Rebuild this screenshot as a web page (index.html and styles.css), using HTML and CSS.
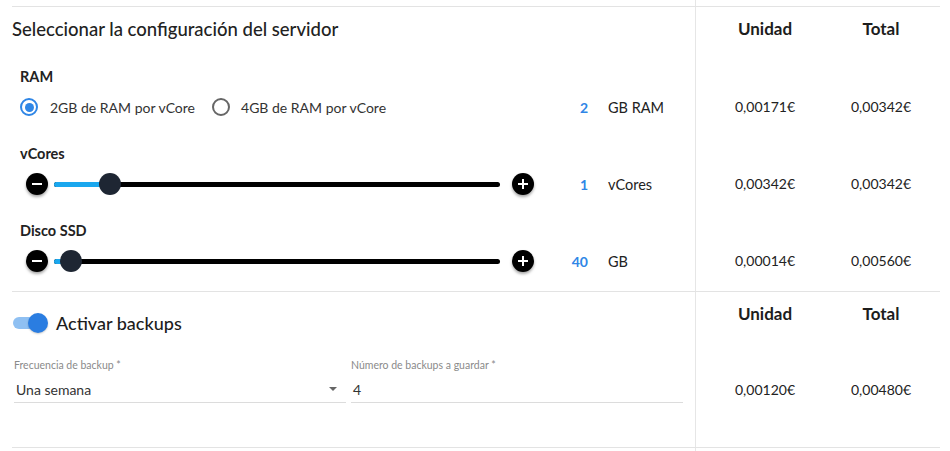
FILE: index.html
```html
<!DOCTYPE html>
<html lang="es">
<head>
    <meta charset="UTF-8">
    <meta name="viewport" content="width=device-width, initial-scale=1.0">
    <title>Configuración del servidor</title>
    <link rel="stylesheet" href="styles.css">
</head>
<body>
    <div class="sheet">
        <!-- Server config -->
        <section class="block config">
            <div class="row head">
                <h2 class="title">Seleccionar la configuración del servidor</h2>
                <div class="col-head">Unidad</div>
                <div class="col-head">Total</div>
            </div>

            <div class="row resource">
                <div class="res-label">RAM</div>
                <div class="res-control">
                    <div class="input-area radios">
                        <label class="radio checked"><span class="ring"></span>2GB de RAM por vCore</label>
                        <label class="radio"><span class="ring"></span>4GB de RAM por vCore</label>
                    </div>
                    <span class="qty">2</span>
                    <span class="unit">GB RAM</span>
                </div>
                <div class="price">0,00171€</div>
                <div class="price">0,00342€</div>
            </div>

            <div class="row resource">
                <div class="res-label">vCores</div>
                <div class="res-control">
                    <div class="input-area slider">
                        <span class="step-btn">
                            <svg width="22" height="22" viewBox="0 0 22 22"><path d="M6 11h10" stroke="#fff" stroke-width="2"/></svg>
                        </span>
                        <div class="track">
                            <div class="fill" style="width: 12.6%"></div>
                            <span class="thumb" style="left: 12.6%"></span>
                        </div>
                        <span class="step-btn">
                            <svg width="22" height="22" viewBox="0 0 22 22"><path d="M6 11h10M11 6v10" stroke="#fff" stroke-width="2"/></svg>
                        </span>
                    </div>
                    <span class="qty">1</span>
                    <span class="unit">vCores</span>
                </div>
                <div class="price">0,00342€</div>
                <div class="price">0,00342€</div>
            </div>

            <div class="row resource">
                <div class="res-label">Disco SSD</div>
                <div class="res-control">
                    <div class="input-area slider">
                        <span class="step-btn">
                            <svg width="22" height="22" viewBox="0 0 22 22"><path d="M6 11h10" stroke="#fff" stroke-width="2"/></svg>
                        </span>
                        <div class="track">
                            <div class="fill" style="width: 3.7%"></div>
                            <span class="thumb" style="left: 3.7%"></span>
                        </div>
                        <span class="step-btn">
                            <svg width="22" height="22" viewBox="0 0 22 22"><path d="M6 11h10M11 6v10" stroke="#fff" stroke-width="2"/></svg>
                        </span>
                    </div>
                    <span class="qty">40</span>
                    <span class="unit">GB</span>
                </div>
                <div class="price">0,00014€</div>
                <div class="price">0,00560€</div>
            </div>
        </section>

        <!-- Backups -->
        <section class="block backups">
            <div class="backup-main">
                <div class="toggle-row">
                    <span class="switch"><span class="knob"></span></span>
                    <span class="toggle-label">Activar backups</span>
                </div>
                <div class="fields">
                    <div class="field">
                        <span class="field-label">Frecuencia de backup *</span>
                        <div class="field-value">
                            <span>Una semana</span>
                            <span class="caret"></span>
                        </div>
                    </div>
                    <div class="field">
                        <span class="field-label">Número de backups a guardar *</span>
                        <div class="field-value"><span>4</span></div>
                    </div>
                </div>
            </div>
            <div class="col-head">Unidad</div>
            <div class="col-head">Total</div>
            <div class="price backup-price">0,00120€</div>
            <div class="price backup-price">0,00480€</div>
        </section>
    </div>
</body>
</html>
```

FILE: styles.css
```css
body {
    margin: 0;
    background-color: #fff;
    color: #222;
    font-family: Lato, "Noto Sans", sans-serif;
}
.sheet {
    width: 928px;
    min-height: 451px;
    margin-left: 12px;
    padding-top: 6px;
    box-sizing: border-box;
    background: linear-gradient(#e6e6e6, #e6e6e6) 683px 0 / 1px 100% no-repeat;
}
.block {
    border-top: 1px solid #e3e3e3;
}
.block.backups {
    border-bottom: 1px solid #e3e3e3;
}

/* grid rows shared by both blocks */
.row, .backups {
    display: grid;
    grid-template-columns: 695px 116px 116px;
}
.config {
    padding-bottom: 10px;
}
.head {
    height: 60px;
    padding-top: 10px;
    box-sizing: border-box;
}
.title {
    margin: 0;
    font-size: 18.5px;
    font-weight: 500;
    line-height: 24px;
    color: #222;
}
.col-head {
    text-align: center;
    font-size: 17px;
    font-weight: 700;
    line-height: 24px;
    color: #1d1d1d;
}
.resource {
    grid-template-rows: 20px 40px;
}
.resource + .resource {
    margin-top: 17px;
}
.res-label {
    grid-column: 1;
    padding-left: 8px;
    font-size: 14.5px;
    font-weight: 700;
    line-height: 20px;
}
.res-control {
    grid-column: 1;
    display: flex;
    align-items: center;
    padding-left: 8px;
    font-size: 14px;
}
.price {
    text-align: center;
    font-size: 14px;
    line-height: 40px;
    color: #222;
}
.input-area {
    width: 514px;
    display: flex;
    align-items: center;
}
.qty {
    width: 54px;
    text-align: right;
    font-weight: 700;
    color: #2f86e6;
}
.unit {
    margin-left: 20px;
    font-size: 14.5px;
    color: #222;
}

/* radios */
.radio {
    display: flex;
    align-items: center;
    color: #333;
    margin-right: 17px;
}
.ring {
    width: 18px;
    height: 18px;
    box-sizing: border-box;
    border: 2px solid #666;
    border-radius: 50%;
    margin-right: 12px;
    display: flex;
    align-items: center;
    justify-content: center;
}
.radio + .radio .ring {
    margin-right: 11px;
}
.radio.checked .ring {
    border-color: #2f86e6;
}
.radio.checked .ring::after {
    content: "";
    width: 9px;
    height: 9px;
    border-radius: 50%;
    background-color: #2f86e6;
}

/* sliders */
.slider {
    padding-left: 6px;
    box-sizing: border-box;
}
.step-btn {
    width: 22px;
    height: 22px;
    border-radius: 50%;
    background-color: #000;
    box-shadow: 0 2px 3px rgba(0, 0, 0, 0.35);
    display: flex;
}
.track {
    flex: 1;
    height: 5px;
    margin: 0 12px 0 6px;
    border-radius: 3px;
    background-color: #000;
    position: relative;
}
.fill {
    height: 100%;
    border-radius: 3px;
    background-color: #1aa7ee;
}
.thumb {
    position: absolute;
    top: 50%;
    width: 22px;
    height: 22px;
    margin: -11px 0 0 -11px;
    border-radius: 50%;
    background-color: #1e2633;
}

/* backups */
.backups {
    grid-template-rows: auto 1fr;
}
.backup-main {
    grid-row: 1 / span 2;
    padding: 19px 0 44px 0;
}
.toggle-row {
    display: flex;
    align-items: center;
    height: 24px;
}
.switch {
    width: 36px;
    height: 20px;
    position: relative;
    display: flex;
    align-items: center;
}
.switch::before {
    content: "";
    width: 32px;
    height: 12px;
    margin-left: 1px;
    border-radius: 6px;
    background-color: #8fc0f2;
}
.knob {
    position: absolute;
    left: 16px;
    top: 0;
    width: 20px;
    height: 20px;
    border-radius: 50%;
    background-color: #2a7de1;
    box-shadow: 0 1px 2px rgba(0, 0, 0, 0.2);
}
.toggle-label {
    margin-left: 8px;
    font-size: 18px;
    font-weight: 500;
    color: #1d1d1d;
}
.fields {
    display: flex;
    gap: 5px;
    margin-top: 24px;
    padding-left: 2px;
}
.field {
    width: 332px;
}
.field-label {
    display: block;
    font-size: 10.5px;
    line-height: 12px;
    color: #8a8a8a;
}
.field-value {
    display: flex;
    align-items: center;
    justify-content: space-between;
    margin-top: 8px;
    padding: 0 9px 3px 2px;
    height: 20px;
    font-size: 14px;
    color: #333;
    border-bottom: 1px solid #dcdcdc;
}
.caret {
    width: 0;
    height: 0;
    border-left: 4px solid transparent;
    border-right: 4px solid transparent;
    border-top: 4px solid #666;
}
.backups .col-head {
    padding-top: 10px;
    grid-row: 1;
}
.backup-price {
    grid-row: 2;
    margin-top: 44px;
    align-self: start;
}
```
